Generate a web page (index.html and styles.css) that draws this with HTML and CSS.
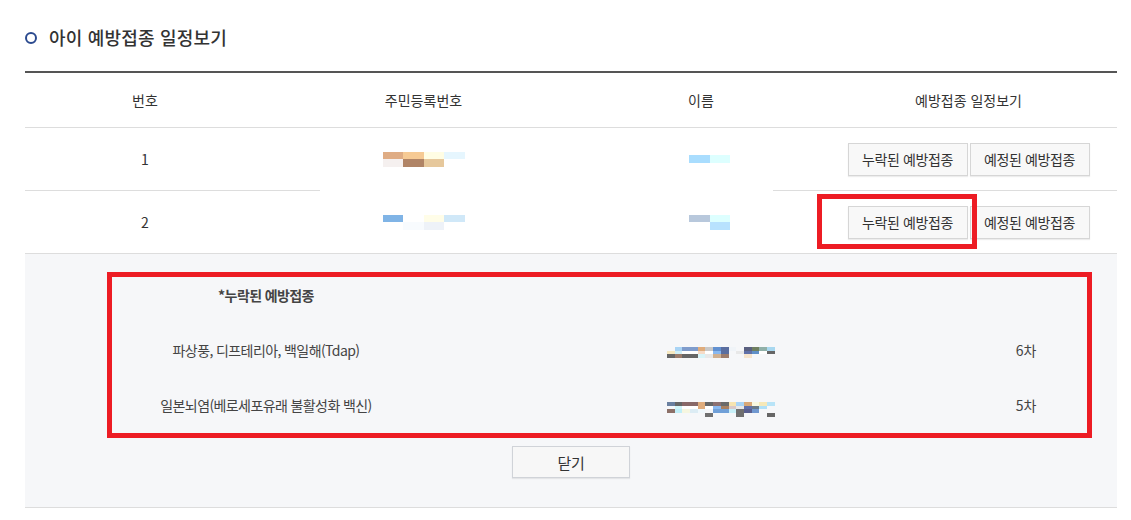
FILE: index.html
```html
<!DOCTYPE html>
<html lang="ko">
<head>
<meta charset="utf-8">
<title>아이 예방접종 일정보기</title>
<link rel="stylesheet" href="styles.css">
</head>
<body>
<div class="wrap">
  <h2 class="title"><span class="ring"></span>아이 예방접종 일정보기</h2>

  <div class="table">
    <div class="row head">
      <div class="c c1">번호</div>
      <div class="c c2">주민등록번호</div>
      <div class="c c3">이름</div>
      <div class="c c4">예방접종 일정보기</div>
    </div>
    <div class="row">
      <div class="c c1">1</div>
      <div class="c c2"><div class="mosaic big" data-cols="4" data-cells="#dfac84,#f6ca94,#fffde4,#e6f6fe,#f5f0ef,#b08466,#e6c89c,-"></div></div>
      <div class="c c3"><div class="mosaic big name" data-cols="2" data-cells="#a9ddfe,#ddffff"></div></div>
      <div class="c c4 btns"><button class="btn">누락된 예방접종</button><button class="btn">예정된 예방접종</button></div>
    </div>
    <div class="row">
      <div class="c c1">2</div>
      <div class="c c2"><div class="mosaic big" data-cols="4" data-cells="#80b4e6,-,#fffde8,#d0e8f8,-,#f8fbfe,#eef2f8,-"></div></div>
      <div class="c c3"><div class="mosaic big name" data-cols="2" data-cells="#b8c8dc,#ddffff,-,#b8e2fe"></div></div>
      <div class="c c4 btns"><button class="btn">누락된 예방접종</button><button class="btn">예정된 예방접종</button></div>
    </div>

    <div class="detail">
      <div class="box">
        <div class="dhead">*누락된 예방접종</div>
        <div class="drow">
          <div class="dname">파상풍, 디프테리아, 백일해(Tdap)</div>
          <div class="ddate"><div class="mosaic small" data-cols="14" data-cells="-,#a9d4f5,#7f9ccc,#7f9ccc,#dfac7c,#c8c8c8,#6190d0,#5a6ea0,#f0f4f8,-,#5a6080,#6f7f60,#90b0a8,#a8d8f0,#f6e8c0,#d0f0f8,#ffffff,#ffffff,#f6dcc8,#ffffff,#88b8f0,#5a6ea0,-,#e8e8e8,#6070a8,#6090c8,#ffffff,#666666,#666666,#9c7c6c,#666666,#666666,#d8f4f8,#e8e8e8,#d0b090,#9c7c6c,-,-,#f6e4cc,-,-,-"></div></div>
          <div class="dnum">6차</div>
        </div>
        <div class="drow">
          <div class="dname">일본뇌염(베로세포유래 불활성화 백신)</div>
          <div class="ddate"><div class="mosaic small" data-cols="14" data-cells="#6a80a0,#666666,#886868,#886868,#dfac7c,#666666,#8c7070,#6a6a6a,#f6e4b0,#a9d4f5,#d8a878,#f8f8e0,#f6e8b8,#b8e4f8,-,#d0f4f8,#ffffff,#ffffff,#dfac7c,#ffffff,#88b8f0,#a88060,#d8c8c8,#e8e8e8,#6070a8,#6a7a88,#b0e0f8,-,#8c7068,#c0eef8,#f6f6e0,#dcecf4,#f0f8fc,-,#70a0d8,#70a0d8,#c8f0f8,#707070,#5a6090,#7098d0,-,-,-,-,-,-,-,#707070,-,-,-,#707070,-,-,-,#666666"></div></div>
          <div class="dnum">5차</div>
        </div>
      </div>
      <div class="close-wrap"><button class="btn close">닫기</button></div>
    </div>

    <div class="patch"></div>
    <div class="mark"></div>
  </div>
</div>
<script src="mosaic.js"></script>
</body>
</html>
```

FILE: styles.css
```css
* { box-sizing: border-box; }
html, body { margin: 0; padding: 0; background: #fff; }
body {
  font-family: "Noto Sans CJK KR", "Noto Sans", sans-serif;
  color: #333;
  width: 1131px;
}
.wrap { padding: 0 14px 0 25px; }
.title {
  margin: 0;
  padding-top: 26px;
  height: 71px;
  font-size: 18px;
  line-height: 22px;
  font-weight: 500;
  color: #333;
  display: flex;
  align-items: flex-start;
  letter-spacing: 0.2px;
}
.ring {
  width: 12px; height: 12px;
  border: 2.5px solid #2b4a8f;
  border-radius: 50%;
  margin: 6px 12px 0 0;
  flex: none;
}
.table {
  position: relative;
  border-top: 2px solid #555;
}
.row {
  display: grid;
  grid-template-columns: 240px 317px 238px 297px;
  height: 63px;
  border-bottom: 1px solid #ddd;
  font-size: 14px;
}
.row.head { height: 55px; }
.c {
  display: flex;
  align-items: center;
  justify-content: center;
}
.btns { gap: 2px; }
.btn {
  font-family: inherit;
  font-size: 14px;
  color: #333;
  background: #f8f8f8;
  border: 1px solid #d6d6d6;
  box-shadow: 0 1px 1px rgba(0,0,0,0.07);
  width: 120px;
  height: 33px;
  padding: 0;
  letter-spacing: -0.4px;
  cursor: pointer;
}
.mosaic { display: grid; width: max-content; justify-content: start; }
.mosaic.big { grid-auto-rows: 7.5px; }
.mosaic.big > i { width: 20.5px; }
.mosaic.name { margin-left: 17px; }
.mosaic.small { grid-auto-rows: 3.7px; }
.mosaic.small > i { width: 7.7px; }
.mosaic > i { display: block; }

.detail {
  background: #f6f7f9;
  border-bottom: 1px solid #ddd;
  padding: 18px 0 29px;
}
.box {
  margin: 0 25px 0 82px;
  border: 5px solid #ed1c24;
  height: 166px;
  color: #444;
  font-size: 14px;
  letter-spacing: -0.6px;
}
.dhead {
  width: 308px;
  text-align: center;
  font-weight: 700;
  line-height: 36px;
  margin-bottom: 9px;
}
.drow {
  display: grid;
  grid-template-columns: 308px 545px 122px;
  height: 55px;
  align-items: center;
}
.dname { text-align: center; }
.ddate { align-self: start; padding: 25px 0 0 247px; }
.dnum { text-align: center; letter-spacing: 0; }
.close-wrap {
  display: flex;
  justify-content: center;
  margin-top: 8px;
}
.btn.close { width: 118px; height: 32px; border-color: #d0d3d8; background: #f7f7f7; font-size: 15px; }

.patch {
  position: absolute;
  left: 295px;
  top: 117px;
  width: 453px;
  height: 2px;
  background: #fff;
}
.mark {
  position: absolute;
  left: 792px;
  top: 121px;
  width: 160px;
  height: 55px;
  border: 5px solid #ed1c24;
}
```

FILE: mosaic.js
```javascript
document.querySelectorAll('.mosaic').forEach(function (m) {
  var cols = parseInt(m.getAttribute('data-cols'), 10);
  m.style.gridTemplateColumns = 'repeat(' + cols + ', auto)';
  m.getAttribute('data-cells').split(',').forEach(function (c) {
    var i = document.createElement('i');
    if (c !== '-') i.style.background = c;
    m.appendChild(i);
  });
});
```
